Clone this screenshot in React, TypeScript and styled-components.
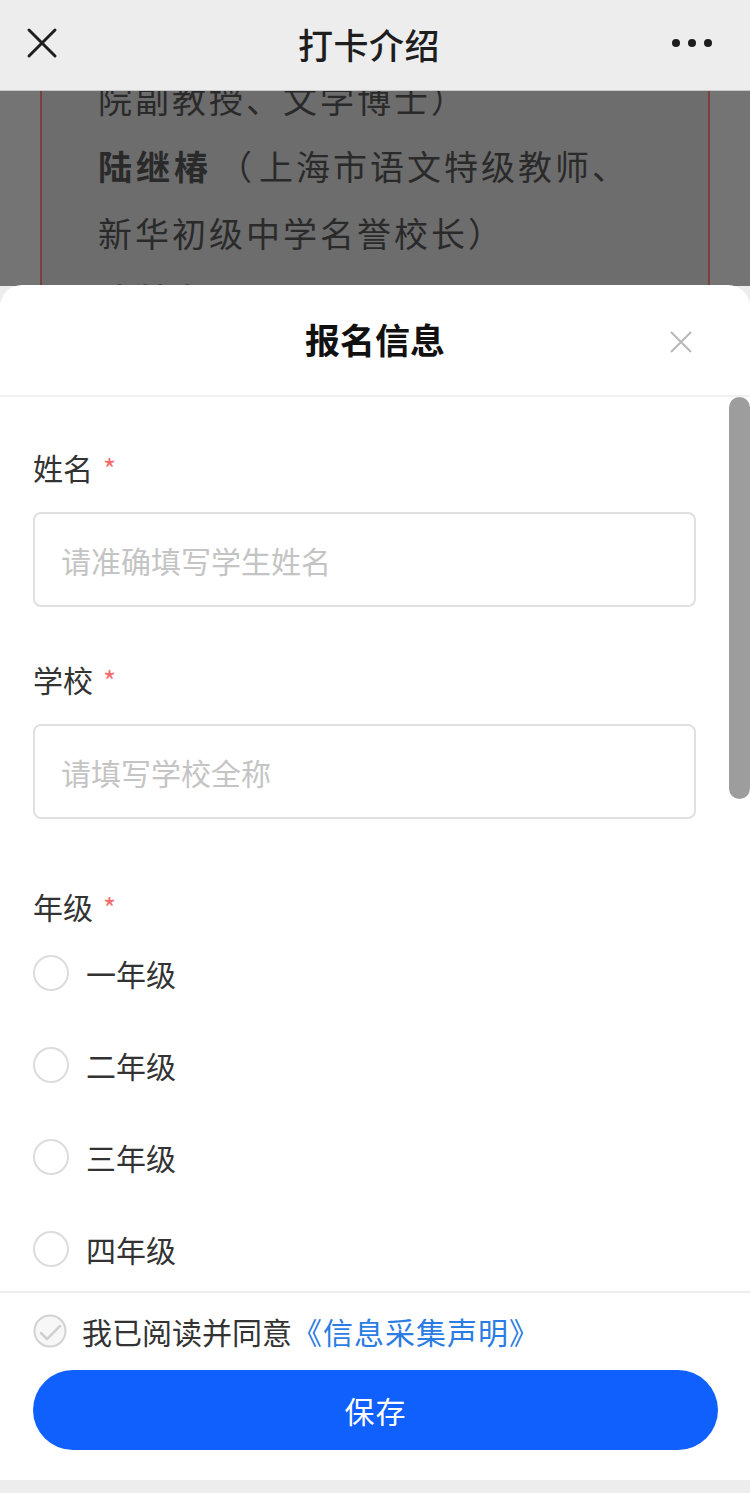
import styled, { createGlobalStyle } from "styled-components";

const GlobalStyle = createGlobalStyle`
  html, body {
    margin: 0;
    padding: 0;
    background: #ededed;
  }
  body {
    font-family: "Noto Sans CJK SC", "Noto Sans", sans-serif;
    color: #333;
  }
  * {
    box-sizing: border-box;
  }
`;

const grades = ["一年级", "二年级", "三年级", "四年级"];

export default function App() {
  return (
    <>
      <GlobalStyle />
      <Page>
        <NavBar>
          <NavIcon aria-label="close">
            <svg width="32" height="32" viewBox="0 0 32 32">
              <path d="M3 3 L29 29 M29 3 L3 29" stroke="#1e1e1e" strokeWidth="3" strokeLinecap="round" />
            </svg>
          </NavIcon>
          <NavTitle>打卡介绍</NavTitle>
          <NavIcon $end aria-label="more">
            <svg width="40" height="10" viewBox="0 0 40 10">
              <circle cx="4" cy="5" r="4" fill="#1e1e1e" />
              <circle cx="20" cy="5" r="4" fill="#1e1e1e" />
              <circle cx="36" cy="5" r="4" fill="#1e1e1e" />
            </svg>
          </NavIcon>
        </NavBar>

        <Backdrop>
          <Article>
            <ArticleLine>院副教授、文学博士）</ArticleLine>
            <ArticleLine>
              <strong>陆继椿</strong>
              <Paren>（</Paren>上海市语文特级教师、
            </ArticleLine>
            <ArticleLine>新华初级中学名誉校长）</ArticleLine>
            <ArticleLine>
              <strong>钱梦龙</strong>
              <Paren>（</Paren>特级教师、特级教
            </ArticleLine>
          </Article>
        </Backdrop>

        <Sheet>
          <SheetHeader>
            <SheetTitle>报名信息</SheetTitle>
            <SheetClose aria-label="close">
              <svg width="24" height="24" viewBox="0 0 24 24">
                <path d="M2 2 L22 22 M22 2 L2 22" stroke="#b8b8b8" strokeWidth="2" />
              </svg>
            </SheetClose>
          </SheetHeader>

          <ScrollArea>
            <FormBody>
              <Field>
                <Label>
                  姓名<Required>*</Required>
                </Label>
                <Input placeholder="请准确填写学生姓名" />
              </Field>
              <Field $gap={52}>
                <Label>
                  学校<Required>*</Required>
                </Label>
                <Input placeholder="请填写学校全称" />
              </Field>
              <Field $gap={67}>
                <Label>
                  年级<Required>*</Required>
                </Label>
                <RadioList>
                  {grades.map((g) => (
                    <RadioRow key={g}>
                      <RadioCircle />
                      <RadioText>{g}</RadioText>
                    </RadioRow>
                  ))}
                </RadioList>
              </Field>
            </FormBody>
            <ScrollTrack>
              <ScrollThumb />
            </ScrollTrack>
          </ScrollArea>

          <Footer>
            <AgreeRow>
              <svg width="34" height="34" viewBox="0 0 34 34">
                <circle cx="17" cy="17" r="15.5" fill="#f7f7f7" stroke="#d2d2d2" strokeWidth="2" />
                <path d="M8 19 L14 25 L27 12" fill="none" stroke="#d0d0d0" strokeWidth="2.5" strokeLinecap="round" strokeLinejoin="round" />
              </svg>
              <AgreeText>
                我已阅读并同意<AgreeLink>《信息采集声明》</AgreeLink>
              </AgreeText>
            </AgreeRow>
            <SaveButton>保存</SaveButton>
          </Footer>
        </Sheet>
        <BottomBar />
      </Page>
    </>
  );
}

const Page = styled.div`
  width: 750px;
  height: 1493px;
  display: flex;
  flex-direction: column;
  overflow: hidden;
  background: #ededed;
`;

const NavBar = styled.div`
  height: 91px;
  flex-shrink: 0;
  display: grid;
  grid-template-columns: 1fr auto 1fr;
  align-items: center;
  padding: 0 38px 4px 26px;
  background: #ededed;
  border-bottom: 1px solid #c9c9c9;
`;

const NavIcon = styled.div<{ $end?: boolean }>`
  display: flex;
  align-items: center;
  justify-content: ${(p) => (p.$end ? "flex-end" : "flex-start")};
`;

const NavTitle = styled.div`
  font-size: 35px;
  font-weight: 500;
  color: #1e1e1e;
  letter-spacing: 0.5px;
`;

const Backdrop = styled.div`
  height: 195px;
  flex-shrink: 0;
  background: #747474;
  overflow: hidden;
  padding: 0 40px;
`;

const Article = styled.div`
  height: calc(100% + 26px);
  margin-top: -26px;
  padding: 0 0 0 56px;
  border-left: 2px solid #7a3f3f;
  border-right: 2px solid #7a3f3f;
  background: #6d6d6d;
`;

const ArticleLine = styled.div`
  font-size: 34px;
  line-height: 67px;
  letter-spacing: 3px;
  color: #2a2a2a;
  white-space: nowrap;

  strong {
    font-weight: 700;
    letter-spacing: 4px;
  }
`;

const Paren = styled.span`
  margin: 0 4px 0 6px;
`;

const Sheet = styled.div`
  flex: 1;
  display: flex;
  flex-direction: column;
  background: #fff;
  border-radius: 22px 22px 0 0;
  margin-top: -1px;
`;

const SheetHeader = styled.div`
  position: relative;
  height: 112px;
  flex-shrink: 0;
  display: flex;
  align-items: center;
  justify-content: center;
  border-bottom: 2px solid #f1f1f4;
  padding-bottom: 4px;
`;

const SheetTitle = styled.div`
  font-size: 35px;
  font-weight: 600;
  color: #111;
`;

const SheetClose = styled.div`
  position: absolute;
  right: 57px;
  top: 45px;
  display: flex;
`;

const ScrollArea = styled.div`
  height: 894px;
  flex-shrink: 0;
  display: flex;
  overflow: hidden;
`;

const FormBody = styled.div`
  flex: 1;
  padding: 50px 33px 0 33px;
`;

const Field = styled.div<{ $gap?: number }>`
  display: flex;
  flex-direction: column;
  margin-top: ${(p) => p.$gap ?? 0}px;
`;

const Label = styled.div`
  font-size: 30px;
  line-height: 40px;
  color: #333;
  display: flex;
  align-items: center;
`;

const Required = styled.span`
  color: #f26b6b;
  font-size: 28px;
  line-height: 28px;
  margin-left: 10px;
  margin-top: 2px;
`;

const Input = styled.input`
  margin-top: 25px;
  height: 95px;
  width: 100%;
  border: 2px solid #e0e0e0;
  border-radius: 8px;
  padding: 0 26px;
  font-family: inherit;
  font-size: 30px;
  color: #333;
  outline: none;
  background: #fff;

  &::placeholder {
    color: #c4c4c4;
  }
`;

const RadioList = styled.div`
  display: flex;
  flex-direction: column;
  margin-top: 1px;
`;

const RadioRow = styled.div`
  height: 92px;
  display: flex;
  align-items: center;
  gap: 17px;
`;

const RadioCircle = styled.div`
  width: 36px;
  height: 36px;
  border-radius: 50%;
  border: 2px solid #dcdcdc;
  background: #fff;
`;

const RadioText = styled.div`
  font-size: 30px;
  color: #333;
`;

const ScrollTrack = styled.div`
  width: 21px;
  flex-shrink: 0;
`;

const ScrollThumb = styled.div`
  width: 21px;
  height: 402px;
  border-radius: 11px;
  background: #9d9d9d;
`;

const Footer = styled.div`
  flex: 1;
  border-top: 2px solid #eeeeee;
  padding: 18px 32px 0 33px;
  display: flex;
  flex-direction: column;
`;

const AgreeRow = styled.div`
  height: 40px;
  display: flex;
  align-items: center;
  gap: 15px;
`;

const AgreeText = styled.div`
  font-size: 30px;
  color: #333;
  white-space: nowrap;
`;

const AgreeLink = styled.span`
  color: #2b7ce3;
  letter-spacing: 1px;
`;

const SaveButton = styled.button`
  margin-top: 19px;
  height: 80px;
  width: 100%;
  border: none;
  border-radius: 40px;
  background: #0f60fd;
  color: #fff;
  font-family: inherit;
  font-size: 30px;
  letter-spacing: 1px;
`;

const BottomBar = styled.div`
  height: 13px;
  flex-shrink: 0;
  background: #ededed;
`;
